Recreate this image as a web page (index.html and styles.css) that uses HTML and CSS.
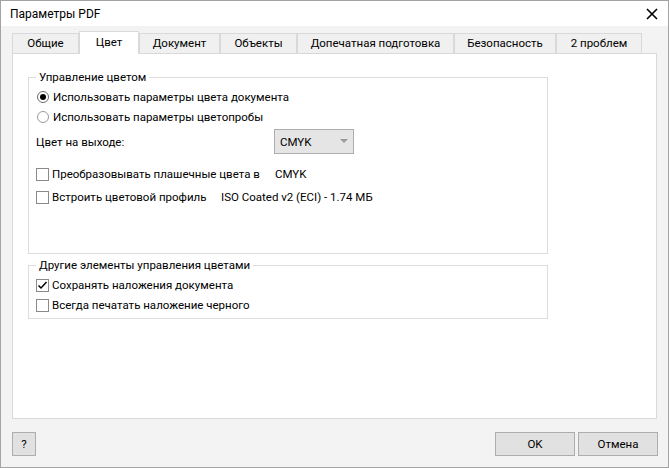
FILE: index.html
```html
<!DOCTYPE html>
<html lang="ru">
<head>
<meta charset="utf-8">
<title>Параметры PDF</title>
<link rel="stylesheet" href="styles.css">
</head>
<body>
<div class="window">
  <div class="titlebar">
    <span class="title">Параметры PDF</span>
    <svg class="close" width="12" height="12" viewBox="0 0 12 12"><path d="M1 1L11 11M11 1L1 11" stroke="#000" stroke-width="1.6" fill="none"/></svg>
  </div>
  <div class="client">
    <div class="tabs">
      <div class="tab w-general">Общие</div>
      <div class="tab active w-color">Цвет</div>
      <div class="tab w-doc">Документ</div>
      <div class="tab w-obj">Объекты</div>
      <div class="tab w-prepress">Допечатная подготовка</div>
      <div class="tab w-security">Безопасность</div>
      <div class="tab w-issues">2 проблем</div>
    </div>
    <div class="pane">
      <fieldset class="group group-main">
        <legend>Управление цветом</legend>
        <div class="row first"><span class="radio on"></span><span>Использовать параметры цвета документа</span></div>
        <div class="row"><span class="radio"></span><span>Использовать параметры цветопробы</span></div>
        <div class="row output">
          <span class="out-label">Цвет на выходе:</span>
          <div class="select"><span>CMYK</span><svg class="arrow" width="8" height="5" viewBox="0 0 8 5"><path d="M0 0H8L4 4Z" fill="#9a9a9a"/></svg></div>
        </div>
        <div class="row chk-first"><span class="check"></span><span class="lbl-convert">Преобразовывать плашечные цвета в</span><span>CMYK</span></div>
        <div class="row chk-next"><span class="check"></span><span class="lbl-profile">Встроить цветовой профиль</span><span>ISO Coated v2 (ECI) - 1.74 МБ</span></div>
      </fieldset>
      <fieldset class="group group-other">
        <legend>Другие элементы управления цветами</legend>
        <div class="row first"><span class="check"><svg width="11" height="11" viewBox="0 0 11 11"><path d="M1.5 5.5L4 8L9.5 2" stroke="#000" stroke-width="1.5" fill="none"/></svg></span><span>Сохранять наложения документа</span></div>
        <div class="row"><span class="check"></span><span>Всегда печатать наложение черного</span></div>
      </fieldset>
    </div>
    <div class="footer">
      <button class="btn btn-help">?</button>
      <div class="spacer"></div>
      <button class="btn btn-wide">OK</button>
      <button class="btn btn-wide btn-cancel">Отмена</button>
    </div>
  </div>
</div>
</body>
</html>
```

FILE: styles.css
```css
html, body {
  margin: 0;
  padding: 0;
  background: #ffffff;
}
body {
  width: 669px;
  height: 468px;
  overflow: hidden;
  font-family: Roboto, "Noto Sans", sans-serif;
  font-size: 11.5px;
  color: #000;
}
.window {
  box-sizing: border-box;
  width: 669px;
  height: 468px;
  border: 1px solid #a3a3a3;
  background: #f3f3f3;
  display: flex;
  flex-direction: column;
}
.titlebar {
  height: 25px;
  background: #fff;
  display: flex;
  align-items: center;
  justify-content: space-between;
  padding: 0 10px 0 9px;
  flex: none;
}
.title {
  line-height: 16px;
  font-size: 12px;
}
.client {
  flex: 1;
  padding: 5px 11px 0 11px;
  display: flex;
  flex-direction: column;
}
.tabs {
  display: flex;
  align-items: flex-end;
  height: 22px;
  flex: none;
}
.tab {
  box-sizing: border-box;
  height: 20px;
  border: 1px solid #d9d9d9;
  border-bottom: none;
  background: #f0f0f0;
  text-align: center;
  line-height: 19px;
  white-space: nowrap;
}
.tab.active {
  height: 23px;
  margin-bottom: -1px;
  background: #fff;
  position: relative;
  z-index: 1;
  line-height: 21px;
}
.w-general { width: 67px; }
.w-color { width: 60px; }
.w-doc { width: 81px; }
.w-obj { width: 77px; }
.w-prepress { width: 157px; }
.w-security { width: 102px; }
.w-issues { width: 86px; }
.pane {
  box-sizing: border-box;
  width: 645px;
  height: 366px;
  border: 1px solid #d9d9d9;
  background: #fff;
  padding-left: 15px;
  flex: none;
}
.group {
  box-sizing: border-box;
  width: 520px;
  min-width: 0;
  border: 1px solid #dcdcdc;
  margin: 0;
  padding: 0 0 0 7px;
}
.group legend {
  padding: 0 3px;
  line-height: 16px;
}
.group-main {
  margin-top: 15px;
  padding-bottom: 46px;
}
.group-other {
  margin-top: 3px;
  padding-bottom: 3px;
}
.row {
  display: flex;
  align-items: center;
  height: 20px;
  white-space: nowrap;
}
.row.first { margin-top: 2px; }
.row.output {
  height: 25px;
  margin-top: 2px;
}
.row.chk-first { margin-top: 10px; }
.row.chk-next { margin-top: 3px; }
.radio {
  box-sizing: border-box;
  width: 12px;
  height: 12px;
  border: 1px solid #9a9a9a;
  border-radius: 50%;
  margin: 0 4px 0 1px;
  display: flex;
  align-items: center;
  justify-content: center;
  background: #fff;
}
.radio.on {
  border-color: #6a6a6a;
}
.radio.on::after {
  content: "";
  width: 6px;
  height: 6px;
  border-radius: 50%;
  background: #000;
}
.check {
  box-sizing: border-box;
  width: 13px;
  height: 13px;
  border: 1px solid #8a8a8a;
  background: #fff;
  margin-right: 3px;
  display: flex;
  align-items: center;
  justify-content: center;
}
.out-label { width: 238px; }
.select {
  box-sizing: border-box;
  width: 80px;
  height: 25px;
  border: 1px solid #adadad;
  background: #e5e5e5;
  display: flex;
  align-items: center;
  justify-content: space-between;
  padding: 0 5px 0 5px;
}
.lbl-convert { width: 223px; }
.lbl-profile { width: 169px; }
.footer {
  display: flex;
  margin-top: 13px;
}
.spacer { flex: 1; }
.btn {
  box-sizing: border-box;
  height: 24px;
  border: 1px solid #adadad;
  background: #e1e1e1;
  font-family: inherit;
  font-size: 11.5px;
  color: #000;
  padding: 0;
}
.btn-help { width: 24px; }
.btn-wide { width: 80px; }
.btn-cancel { margin-left: 3px; margin-right: -1px; }
```
